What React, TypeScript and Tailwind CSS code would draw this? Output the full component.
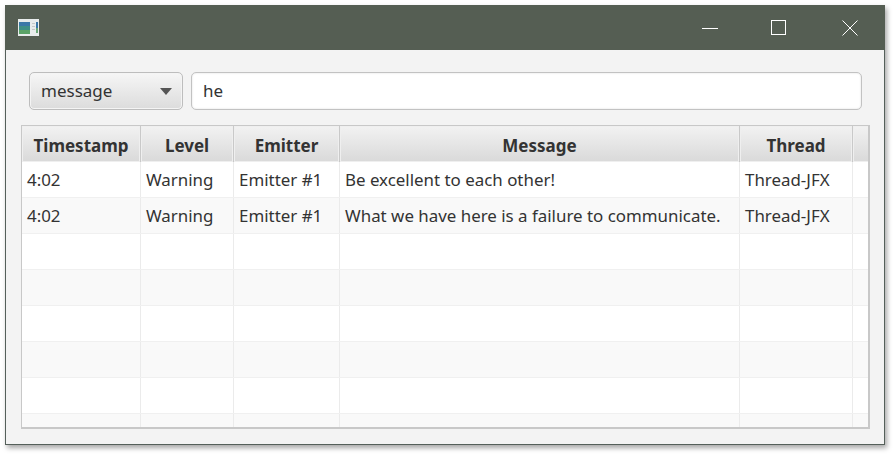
const columns = [
  { label: "Timestamp", width: "w-[119px]" },
  { label: "Level", width: "w-[93px]" },
  { label: "Emitter", width: "w-[106px]" },
  { label: "Message", width: "w-[400px]" },
  { label: "Thread", width: "w-[113px]" },
  { label: "", width: "w-[16px]" },
];

const rows = [
  ["4:02", "Warning", "Emitter #1", "Be excellent to each other!", "Thread-JFX", ""],
  ["4:02", "Warning", "Emitter #1", "What we have here is a failure to communicate.", "Thread-JFX", ""],
  ["", "", "", "", "", ""],
  ["", "", "", "", "", ""],
  ["", "", "", "", "", ""],
  ["", "", "", "", "", ""],
  ["", "", "", "", "", ""],
  ["", "", "", "", "", ""],
];

function AppIcon() {
  return (
    <svg width="21" height="17" viewBox="0 0 21 17">
      <rect width="21" height="17" fill="#e8ecec" />
      <rect x="1" y="3" width="11" height="12" fill="#3f8f86" />
      <rect x="1" y="3" width="11" height="4" fill="#3b78a8" />
      <rect x="1" y="11" width="11" height="4" fill="#5aa267" />
      <rect x="18" y="3" width="2" height="6" fill="#3b78a8" />
      <rect x="18" y="9" width="2" height="5" fill="#6aa878" />
      <rect x="14" y="4" width="3" height="1" fill="#c4c8c8" />
      <rect x="14" y="7" width="3" height="1" fill="#c4c8c8" />
      <rect x="14" y="10" width="3" height="1" fill="#c4c8c8" />
    </svg>
  );
}

function WindowButtons() {
  return (
    <div className="flex items-center">
      <svg width="16" height="16" viewBox="0 0 16 16" className="mr-[53px]">
        <path d="M0 8.5h16" stroke="#fff" strokeWidth="1" />
      </svg>
      <svg width="16" height="16" viewBox="0 0 16 16" className="mr-[55px]">
        <rect x="0.5" y="0.5" width="14" height="14" fill="none" stroke="#fff" strokeWidth="1" />
      </svg>
      <svg width="16" height="16" viewBox="0 0 16 16" className="mr-[26px]">
        <path d="M0.5 0.5l15 15M15.5 0.5l-15 15" stroke="#fff" strokeWidth="1" />
      </svg>
    </div>
  );
}

export default function App() {
  return (
    <div className="w-[894px] h-[454px] bg-white pl-[5px] pt-[5px] font-['Noto_Sans','Open_Sans',sans-serif] text-[#333]">
      <div className="w-[880px] h-[440px] flex flex-col border border-[#55605a] border-t-0 bg-[#f3f3f3] shadow-[2px_3px_5px_rgba(0,0,0,0.35)]">
        <div className="h-[45px] shrink-0 -mx-px bg-[#555e53] flex items-center justify-between pl-[13px] pr-px">
          <AppIcon />
          <WindowButtons />
        </div>

        <div className="flex items-center gap-2 pl-[23px] pr-[22px] pt-[22px]">
          <div className="w-[154px] h-[38px] rounded-[5px] border border-[#bdbdbd] bg-gradient-to-b from-[#f6f6f6] to-[#dcdcdc] shadow-[inset_0_0_0_1px_#f4f4f4] flex items-center justify-between pl-[11px] pr-[10px] text-[17px]">
            <span>message</span>
            <span className="w-0 h-0 border-x-[6px] border-x-transparent border-t-[7px] border-t-[#555]" />
          </div>
          <div className="flex-1 h-[38px] rounded-[5px] border border-[#c2c2c2] bg-white shadow-[inset_0_0_2px_#d8d8d8] flex items-center pl-[11px] text-[17px]">
            he
          </div>
        </div>

        <div className="mt-[15px] ml-[15px] w-[849px] h-[304px] border-2 border-[#c8c8c8] border-l border-t bg-white overflow-hidden flex flex-col">
          <div className="flex h-[36px] shrink-0">
            {columns.map((c, i) => (
              <div
                key={i}
                className={`${c.width} shrink-0 flex items-center justify-center pt-[3px] border-r border-[#c9c9c9] bg-gradient-to-b from-[#f2f2f2] to-[#d9d9d9] shadow-[inset_0_0_0_1px_#efefef] font-bold text-[17px] text-[#333] last:border-r-0`}
              >
                {c.label}
              </div>
            ))}
          </div>
          {rows.map((r, i) => (
            <div
              key={i}
              className={`flex h-[36px] shrink-0 border-b border-[#f0f0f0] ${i % 2 === 1 ? "bg-[#f9f9f9]" : "bg-white"}`}
            >
              {r.map((cell, j) => (
                <div
                  key={j}
                  className={`${columns[j].width} shrink-0 flex items-center pl-[5px] text-[16.9px] text-[#333] whitespace-nowrap border-r border-[#ebebeb] last:border-r-0`}
                >
                  {cell}
                </div>
              ))}
            </div>
          ))}
        </div>
      </div>
    </div>
  );
}
